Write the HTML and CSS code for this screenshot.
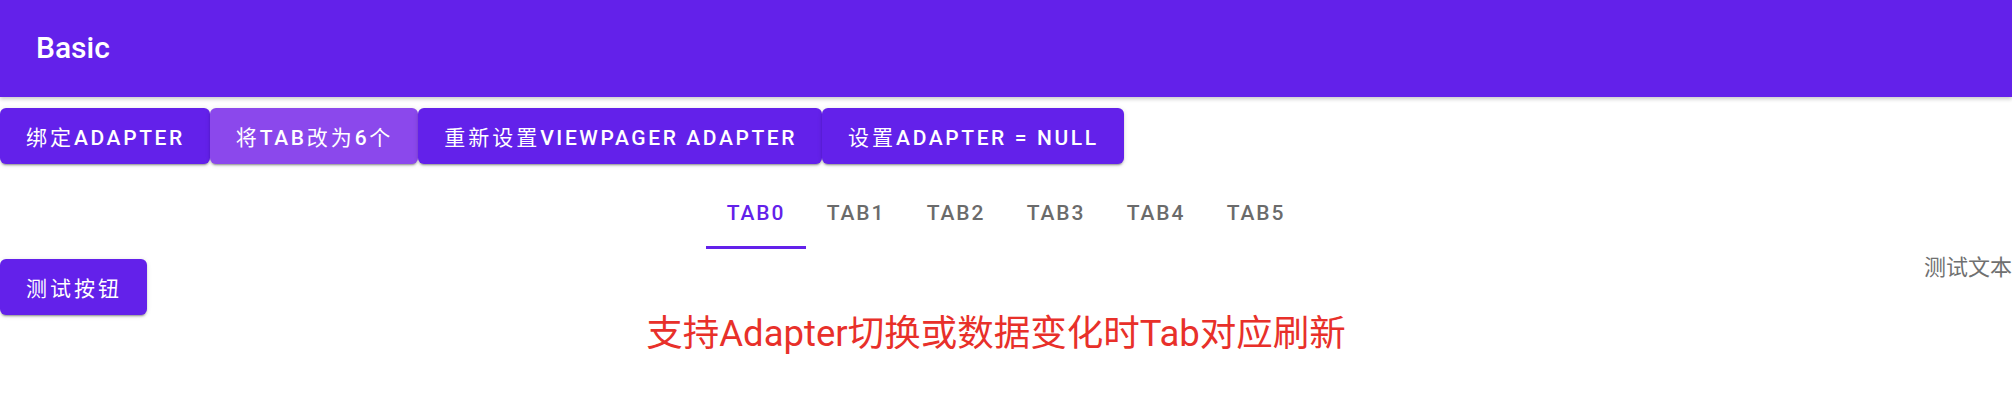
FILE: index.html
```html
<!DOCTYPE html>
<html lang="zh-CN">
<head>
<meta charset="utf-8">
<title>Basic</title>
<link rel="stylesheet" href="styles.css">
</head>
<body>
<header class="appbar"><span class="appbar-title">Basic</span></header>
<div class="btn-row">
  <button class="btn"><span class="cjk">绑定</span>Adapter</button>
  <button class="btn btn-light"><span class="cjk">将</span>Tab<span class="cjk">改为</span>6<span class="cjk">个</span></button>
  <button class="btn"><span class="cjk">重新设置</span>ViewPager Adapter</button>
  <button class="btn"><span class="cjk">设置</span>Adapter = null</button>
</div>
<nav class="tabs">
  <div class="tab tab-active">Tab0</div>
  <div class="tab">Tab1</div>
  <div class="tab">Tab2</div>
  <div class="tab">Tab3</div>
  <div class="tab">Tab4</div>
  <div class="tab">Tab5</div>
</nav>
<div class="test-row">
  <button class="btn"><span class="cjk">测试按钮</span></button>
  <span class="test-text">测试文本</span>
</div>
<p class="notice">支持Adapter切换或数据变化时Tab对应刷新</p>
</body>
</html>
```
FILE: styles.css
```css
html, body {
  margin: 0;
  padding: 0;
  background: #ffffff;
  width: 2012px;
  height: 400px;
  overflow: hidden;
  font-family: Roboto, "Noto Sans CJK SC", sans-serif;
}

.appbar {
  height: 97px;
  background: #6321ea;
  display: flex;
  align-items: center;
  padding-left: 36px;
  box-shadow: 0 2px 4px rgba(0, 0, 0, 0.22);
  position: relative;
  z-index: 1;
}

.appbar-title {
  color: #ffffff;
  font-size: 30px;
  font-weight: 500;
  line-height: 1;
  margin-top: -2px;
}

.btn-row {
  display: flex;
  padding-top: 11px;
  gap: 0;
}

.btn {
  height: 56px;
  border: none;
  margin: 0;
  padding: 0 25px 0 26px;
  background: #6321ea;
  color: #ffffff;
  font-family: Roboto, "Noto Sans CJK SC", sans-serif;
  font-size: 21px;
  font-weight: 500;
  letter-spacing: 2.6px;
  text-transform: uppercase;
  border-radius: 6px;
  box-shadow: 0 3px 1px -2px rgba(0, 0, 0, 0.2), 0 2px 2px 0 rgba(0, 0, 0, 0.14), 0 1px 5px 0 rgba(0, 0, 0, 0.12);
  white-space: nowrap;
}

.cjk {
  font-weight: 400;
  letter-spacing: 3px;
}

.btn-light {
  background: #8b48ec;
}

.tabs {
  display: flex;
  justify-content: center;
  height: 72px;
  margin-top: 13px;
}

.tab {
  width: 100px;
  display: flex;
  align-items: center;
  justify-content: center;
  font-size: 21px;
  font-weight: 500;
  letter-spacing: 0.0892em;
  text-transform: uppercase;
  color: #6b6b6b;
  box-sizing: border-box;
}

.tab-active {
  color: #6321ea;
  border-bottom: 3px solid #6321ea;
  padding-top: 3px;
}

.test-row {
  display: flex;
  justify-content: space-between;
  align-items: flex-start;
  padding-top: 10px;
}

.test-text {
  font-size: 22px;
  color: #707070;
  line-height: 1;
  margin-top: -2px;
}

.notice {
  margin: 0;
  text-align: center;
  color: #e8302a;
  font-size: 36.5px;
  line-height: 38px;
  padding-right: 20px;
}
```
